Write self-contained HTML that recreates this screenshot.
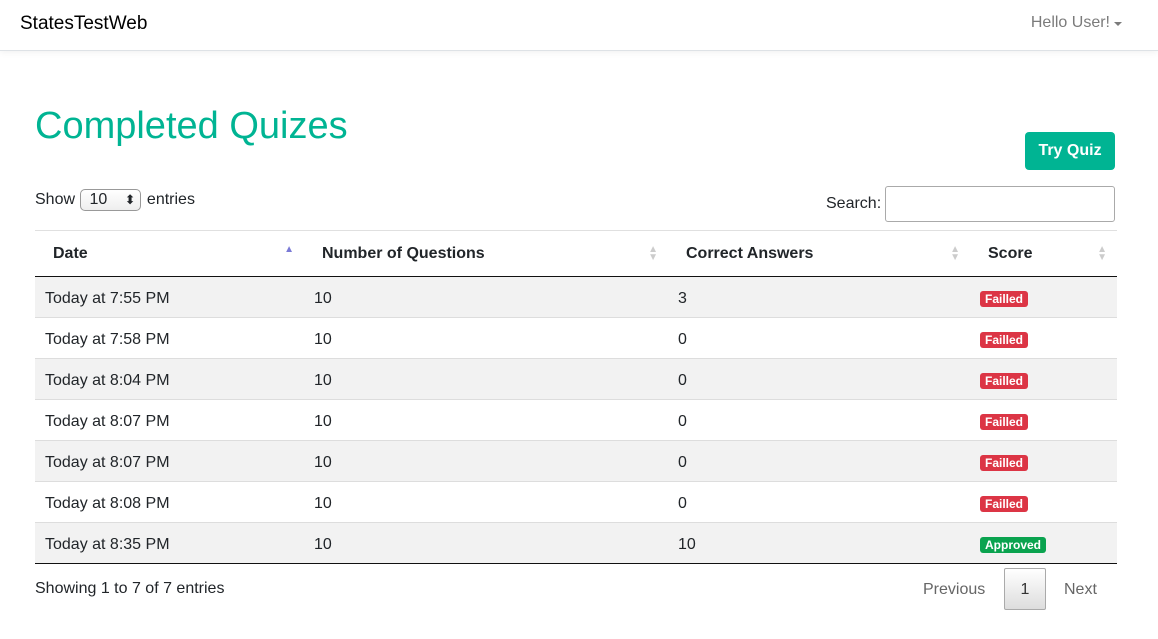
<!DOCTYPE html>
<html><head><style>
*{box-sizing:border-box;margin:0;padding:0}
body{width:1158px;height:639px;overflow:hidden;font-family:"Liberation Sans",sans-serif;color:#212529;background:#fff;font-size:16px}
.nav{position:absolute;left:0;top:0;width:1158px;height:51px;border-bottom:1px solid #dee2e6;box-shadow:0 2px 6px rgba(0,0,0,.05)}
.brand{position:absolute;left:20px;top:13px;font-size:19px;color:#000}
.user{position:absolute;right:48px;top:14px;font-size:16px;color:#7b7b7b}
.user:after{content:"";position:absolute;right:-12px;top:8px;border-left:4px solid transparent;border-right:4px solid transparent;border-top:4px solid #7b7b7b}
h1{position:absolute;left:35px;top:105px;font-size:38px;font-weight:400;color:#00b493}
.btn{position:absolute;left:1025px;top:132px;width:90px;height:38px;background:#00b493;color:#fff;border-radius:4px;font-weight:bold;font-size:16px;text-align:center;line-height:38px}
.show{position:absolute;left:35px;top:189px;font-size:16px}
.sel{display:inline-block;width:61px;height:22px;border:1px solid #999;border-radius:5px;background:linear-gradient(#fff,#eee);vertical-align:middle;margin:0 1px;position:relative;padding-left:8px;line-height:20px;font-size:16px}
.sel:after{content:"⬍";position:absolute;right:5px;top:0;font-size:13px}
.search{position:absolute;left:826px;top:195px;font-size:16px}
.sbox{position:absolute;left:885px;top:186px;width:230px;height:36px;border:1px solid #aaa;border-radius:3px}
table{position:absolute;left:35px;top:230px;width:1082px;border-collapse:collapse;font-size:16px}
th{height:46px;text-align:left;font-weight:bold;border-top:1px solid #e0e0e0;border-bottom:1px solid #111;padding-left:18px;position:relative}
th .ar{position:absolute;right:10px;top:15px;font-size:10px;color:#ccc;line-height:8px}
td{height:41px;padding-left:10px;padding-top:3px;border-top:1px solid #ddd}
tr:nth-child(odd) td{background:#f2f2f2}
tbody tr:last-child td{border-bottom:1px solid #111}
.b{display:inline-block;font-size:12px;font-weight:bold;color:#fff;border-radius:3px;padding:1px 5px;background:#dc3545}
.g{background:#0aa34f}
.info{position:absolute;left:35px;top:580px}
.pg{position:absolute;top:581px;color:#666}
.p1{position:absolute;left:1004px;top:568px;width:42px;height:42px;border:1px solid #aaa;border-radius:2px;background:linear-gradient(#fff,#ddd);text-align:center;line-height:42px;color:#333}
</style></head><body>
<div class="nav"><div class="brand">StatesTestWeb</div><div class="user">Hello User!</div></div>
<h1>Completed Quizes</h1>
<div class="btn">Try Quiz</div>
<div class="show">Show <span class="sel">10</span> entries</div>
<div class="search">Search:</div><div class="sbox"></div>
<table>
<thead><tr>
<th style="width:269px">Date<span class="ar" style="color:#7a7ad6">▲</span></th>
<th style="width:364px">Number of Questions<span class="ar">▲<br>▼</span></th>
<th style="width:302px">Correct Answers<span class="ar">▲<br>▼</span></th>
<th>Score<span class="ar">▲<br>▼</span></th>
</tr></thead>
<tbody>
<tr><td>Today at 7:55 PM</td><td>10</td><td>3</td><td><span class="b">Failled</span></td></tr>
<tr><td>Today at 7:58 PM</td><td>10</td><td>0</td><td><span class="b">Failled</span></td></tr>
<tr><td>Today at 8:04 PM</td><td>10</td><td>0</td><td><span class="b">Failled</span></td></tr>
<tr><td>Today at 8:07 PM</td><td>10</td><td>0</td><td><span class="b">Failled</span></td></tr>
<tr><td>Today at 8:07 PM</td><td>10</td><td>0</td><td><span class="b">Failled</span></td></tr>
<tr><td>Today at 8:08 PM</td><td>10</td><td>0</td><td><span class="b">Failled</span></td></tr>
<tr><td>Today at 8:35 PM</td><td>10</td><td>10</td><td><span class="b g">Approved</span></td></tr>
</tbody></table>
<div class="info">Showing 1 to 7 of 7 entries</div>
<div class="pg" style="left:923px">Previous</div>
<div class="p1">1</div>
<div class="pg" style="left:1064px">Next</div>
</body></html>
